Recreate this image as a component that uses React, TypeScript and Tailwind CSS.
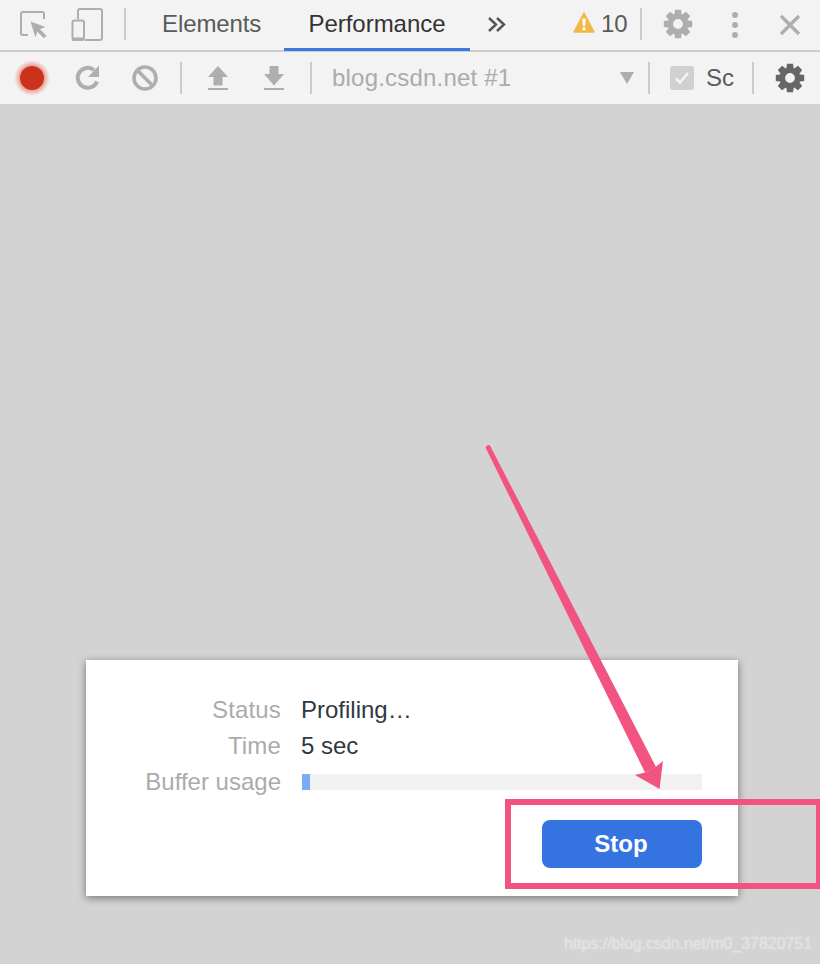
import React from "react";

const Sep = ({ className = "" }: { className?: string }) => (
  <div className={`w-[2px] h-[32px] bg-[#cbcbcb] shrink-0 ${className}`} />
);

const Gear = ({ color, className = "" }: { color: string; className?: string }) => {
  const teeth = [0, 45, 90, 135, 180, 225, 270, 315];
  return (
    <svg width="30" height="30" viewBox="0 0 30 30" className={`shrink-0 ${className}`}>
      <circle cx="15" cy="15" r="7.6" fill="none" stroke={color} strokeWidth="5.4" />
      {teeth.map((a) => (
        <path key={a} d="M12 .8h6l.8 5.400h-7.600z" fill={color} transform={`rotate(${a} 15 15)`} />
      ))}
    </svg>
  );
};

export default function App() {
  return (
    <div
      className="relative w-[820px] h-[964px] overflow-hidden bg-[#d3d3d3] flex flex-col text-[24px]"
      style={{ fontFamily: '"Liberation Sans", Arial, sans-serif' }}
    >
      {/* tab bar */}
      <div className="h-[52px] shrink-0 bg-[#f3f3f3] border-b-2 border-[#cdcdcd] flex items-center relative">
        <svg width="28" height="28" viewBox="0 0 28 28" className="ml-[20px] shrink-0">
          <path d="M8 24H3a2 2 0 0 1-2-2V3a2 2 0 0 1 2-2h19a2 2 0 0 1 2 2v5" fill="none" stroke="#aeaeae" strokeWidth="2" />
          <path d="M10.500 10.500l15 5.500-5.500 2.200 6.500 6.500-2.600 2.600-6.500-6.500-2 5.500z" fill="#aeaeae" />
        </svg>
        <svg width="32" height="33" viewBox="0 0 32 33" className="ml-[23px] mb-[2px] shrink-0">
          <path d="M7 11V3a2 2 0 0 1 2-2h20a2 2 0 0 1 2 2v27a2 2 0 0 1-2 2H14" fill="none" stroke="#aeaeae" strokeWidth="2" />
          <rect x="1.500" y="12.500" width="11.500" height="19.500" rx="2" fill="none" stroke="#aeaeae" strokeWidth="2" />
          <path d="M1 29.500h12v2a1.500 1.500 0 0 1-1.500 1.500h-9a1.500 1.500 0 0 1-1.500-1.500z" fill="#aeaeae" />
        </svg>
        <Sep className="ml-[21px] mb-[2px]" />
        <span className="ml-[36px] mb-[2px] w-[98px] text-[#5a5a5a] leading-none whitespace-nowrap tracking-[-0.1px]">Elements</span>
        <div className="ml-[24px] w-[186px] h-[50px] relative flex items-center justify-center text-[#333333]">
          <span className="mb-[2px] leading-none tracking-[-0.02px]">Performance</span>
          <div className="absolute left-0 right-0 bottom-[-1px] h-[3px] bg-[#3b78e0]" />
        </div>
        <svg width="20" height="17" viewBox="0 0 20 17" className="ml-[17px] mb-[1px] shrink-0">
          <path d="M2 2l7 6.500-7 6.500M10 2l7 6.500-7 6.500" fill="none" stroke="#555555" strokeWidth="2.400" />
        </svg>
        <svg width="22" height="21" viewBox="0 0 22 21" className="ml-[66px] mb-[5px] shrink-0">
          <path d="M11 1L21 20H1z" fill="#eeba45" stroke="#eeba45" strokeWidth="1.500" strokeLinejoin="round" />
          <path d="M9.300 6.500h3.400l-.6 7.500h-2.200z" fill="#fff" />
          <rect x="9.600" y="15.500" width="2.800" height="2.800" fill="#fff" />
        </svg>
        <span className="ml-[6px] mb-[2px] text-[#5a5a5a] leading-none">10</span>
        <Sep className="ml-[12px] mb-[2px]" />
        <Gear color="#aeaeae" className="ml-[21px] mb-[2px]" />
        <svg width="8" height="28" viewBox="0 0 8 28" className="ml-[38px] shrink-0">
          <circle cx="4" cy="4" r="3" fill="#aeaeae" />
          <circle cx="4" cy="14" r="3" fill="#aeaeae" />
          <circle cx="4" cy="24" r="3" fill="#aeaeae" />
        </svg>
        <svg width="22" height="22" viewBox="0 0 22 22" className="ml-[40px] mb-[1px] shrink-0">
          <path d="M2 2l18 18M20 2L2 20" stroke="#aeaeae" strokeWidth="3.400" />
        </svg>
      </div>

      {/* toolbar */}
      <div className="h-[52px] shrink-0 bg-[#f3f3f3] flex items-center">
        <svg width="36" height="36" viewBox="0 0 36 36" className="ml-[14px] shrink-0">
          <defs>
            <radialGradient id="glow">
              <stop offset="0.68" stopColor="#e8a398" />
              <stop offset="0.85" stopColor="#eed0cb" />
              <stop offset="1" stopColor="#f3f3f3" />
            </radialGradient>
          </defs>
          <circle cx="18" cy="18" r="18" fill="url(#glow)" />
          <circle cx="18" cy="18" r="12" fill="#cb311b" />
        </svg>
        <svg width="28" height="28" viewBox="0 0 28 28" className="ml-[24px] shrink-0">
          <path d="M23 17.500A10 10 0 1 1 20 6" fill="none" stroke="#aeaeae" strokeWidth="4" />
          <path d="M25 1.500V13H14z" fill="#aeaeae" />
        </svg>
        <svg width="28" height="28" viewBox="0 0 28 28" className="ml-[29px] shrink-0">
          <circle cx="14" cy="14" r="11" fill="none" stroke="#aeaeae" strokeWidth="3.600" />
          <path d="M6 6l16 16" stroke="#aeaeae" strokeWidth="3.600" />
        </svg>
        <Sep className="ml-[21px]" />
        <svg width="20" height="24" viewBox="0 0 20 24" className="ml-[26px] shrink-0">
          <path d="M10 0L20 11H14.500V19.500H5.500V11H0z" fill="#aeaeae" />
          <rect x="0" y="22" width="20" height="2" fill="#aeaeae" />
        </svg>
        <svg width="20" height="24" viewBox="0 0 20 24" className="ml-[36px] shrink-0">
          <path d="M5.500 0H14.500V8H20L10 19.500 0 8H5.500z" fill="#aeaeae" />
          <rect x="0" y="22" width="20" height="2" fill="#aeaeae" />
        </svg>
        <Sep className="ml-[26px]" />
        <span className="ml-[20px] w-[288px] text-[#ababab] leading-none whitespace-nowrap tracking-[0.2px]">blog.csdn.net #1</span>
        <svg width="14" height="12" viewBox="0 0 14 12" className="shrink-0">
          <path d="M0 0h14L7 12z" fill="#aeaeae" />
        </svg>
        <Sep className="ml-[14px]" />
        <div className="ml-[20px] w-[24px] h-[24px] rounded-[3px] bg-[#d0d0d0] shrink-0 flex items-center justify-center">
          <svg width="16" height="14" viewBox="0 0 16 14">
            <path d="M2 7.500l4 4L14 2" fill="none" stroke="#f3f3f3" strokeWidth="2.600" />
          </svg>
        </div>
        <div className="ml-[12px] w-[30px] text-[#5a5a5a] leading-none whitespace-nowrap">Sc</div>
        <Sep className="ml-[16px]" />
        <Gear color="#666666" className="ml-[21px]" />
      </div>

      {/* main area */}
      <div className="flex-1 flex flex-col pt-[556px] pl-[86px]">
        <div className="w-[652px] h-[236px] bg-white shadow-[0_2px_8px_rgba(0,0,0,0.45)] pt-[32px] pr-[36px] flex flex-col">
          <div className="flex h-[36px] items-center">
            <span className="w-[195px] text-right text-[#ababab] tracking-[0.15px]">Status</span>
            <span className="ml-[20px] text-[#303942]">Profiling…</span>
          </div>
          <div className="flex h-[36px] items-center">
            <span className="w-[195px] text-right text-[#ababab] tracking-[0.15px]">Time</span>
            <span className="ml-[20px] text-[#303942]">5 sec</span>
          </div>
          <div className="flex h-[36px] items-center">
            <span className="w-[195px] text-right text-[#ababab]">Buffer usage</span>
            <div className="ml-[21px] w-[400px] h-[16px] bg-[#f2f2f2]">
              <div className="w-[8px] h-full bg-[#7baaf7]" />
            </div>
          </div>
          <div className="flex justify-end mt-[20px]">
            <button className="w-[160px] h-[48px] pr-[2px] rounded-[8px] bg-[#3574e0] text-white font-bold text-[24px] leading-none">
              Stop
            </button>
          </div>
        </div>
      </div>

      {/* annotation: pink frame */}
      <div className="absolute left-[505px] top-[799px] w-[317px] h-[90px] border-[6px] border-[#f25481]" />
      {/* annotation: arrow */}
      <svg width="820" height="964" viewBox="0 0 820 964" className="absolute left-0 top-0 pointer-events-none">
        <path d="M486 448.500a2.500 2.500 0 0 1 4.400-2.300L656 767 645 772.500z" fill="#f25481" />
        <path d="M659.500 789L635 775 645 772.500 655.500 767 663 761z" fill="#f25481" />
      </svg>
      {/* watermark */}
      <span
        className="absolute left-[564px] top-[934px] text-[16px] leading-[20px] text-[#e2e2e2] whitespace-nowrap tracking-[-0.06px]"
        style={{ textShadow: "0 0 2px rgba(255,255,255,0.45)" }}
      >
        https://blog.csdn.net/m0_37820751
      </span>
    </div>
  );
}
